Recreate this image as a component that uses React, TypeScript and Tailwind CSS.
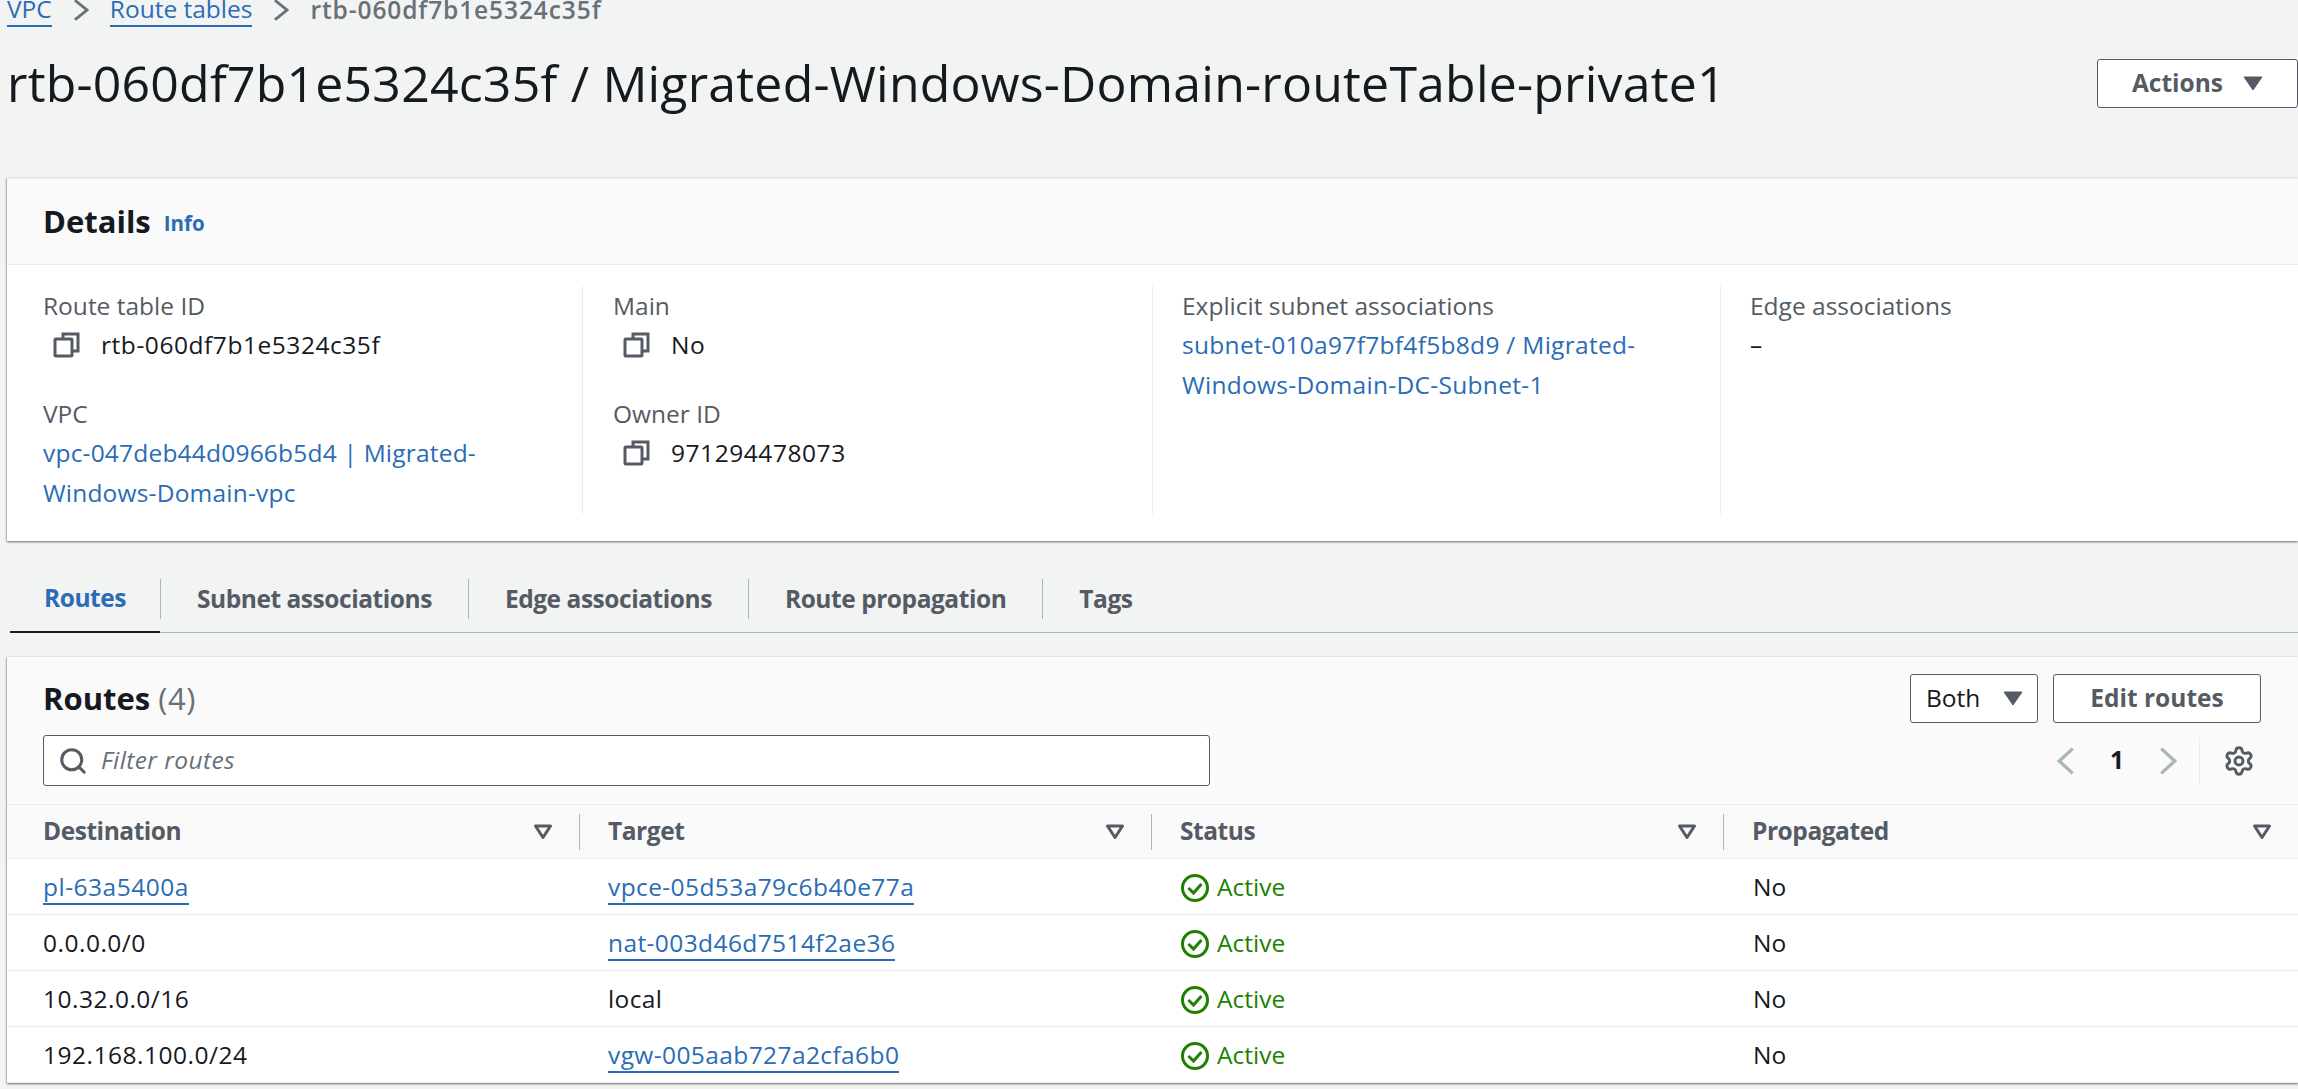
import { Search, Settings } from "lucide-react";

const linkCls = "text-[#2a6cb5]";

function Caret() {
  return (
    <svg width="20" height="15" viewBox="0 0 20 15" className="shrink-0">
      <path d="M1 1h18L10 14z" fill="#545b64" stroke="#545b64" strokeLinejoin="round" />
    </svg>
  );
}

function FilterCaret() {
  return (
    <svg width="20" height="16" viewBox="0 0 20 16" className="shrink-0">
      <path d="M2.5 2h15L10 13.5z" fill="none" stroke="#545b64" strokeWidth="3" strokeLinejoin="round" />
    </svg>
  );
}

function Chevron({ dir, color, w, h }: { dir: "left" | "right"; color: string; w: number; h: number }) {
  return (
    <svg width={w} height={h} viewBox="0 0 16 26" preserveAspectRatio="none" className="shrink-0" fill="none" stroke={color} strokeWidth="3">
      <path d={dir === "right" ? "M2 1.5L14 13 2 24.5" : "M14 1.5L2 13l12 11.5"} />
    </svg>
  );
}

function CopyIcon() {
  return (
    <svg width="27" height="26" viewBox="0 0 27 26" className="shrink-0" fill="none" stroke="#545b64" strokeWidth="3">
      <path d="M10 6V2h15v17h-6" />
      <rect x="2" y="7" width="17" height="17" rx="1" />
    </svg>
  );
}

function ActiveIcon() {
  return (
    <svg width="30" height="30" viewBox="0 0 30 30" className="shrink-0" fill="none" stroke="#1d8102" strokeWidth="3">
      <circle cx="15" cy="15" r="12.5" />
      <path d="M8.5 15l5 5 8-9" />
    </svg>
  );
}

function Field({ label, children }: { label: string; children: React.ReactNode }) {
  return (
    <div className="mb-[29px]">
      <div className="leading-[40px] text-[#545b64]">{label}</div>
      <div className="mt-[-1px]">{children}</div>
    </div>
  );
}

function CopyValue({ value }: { value: string }) {
  return (
    <div className="flex items-center gap-[21px] pl-[10px] leading-[40px] text-[#16191f]">
      <CopyIcon />
      <span className="tracking-[0.55px]">{value}</span>
    </div>
  );
}

const routes = [
  { dest: "pl-63a5400a", destLink: true, target: "vpce-05d53a79c6b40e77a", targetLink: true },
  { dest: "0.0.0.0/0", destLink: false, target: "nat-003d46d7514f2ae36", targetLink: true },
  { dest: "10.32.0.0/16", destLink: false, target: "local", targetLink: false },
  { dest: "192.168.100.0/24", destLink: false, target: "vgw-005aab727a2cfa6b0", targetLink: true },
];

const tabs = ["Subnet associations", "Edge associations", "Route propagation", "Tags"];

export default function App() {
  return (
    <div className="h-[1089px] overflow-hidden bg-[#f2f3f3] text-[24.5px] text-[#16191f] [font-family:'Open_Sans',sans-serif]">
      {/* breadcrumb sits partly above the fold */}
      <div className="mt-[-10px] flex h-[40px] items-center pl-[7px]">
        <span className={`${linkCls} border-b-2 border-[#2a6cb5] leading-[32px]`}>VPC</span>
        <span className="mx-[21px]">
          <Chevron dir="right" color="#687078" w={16} h={22} />
        </span>
        <span className={`${linkCls} border-b-2 border-[#2a6cb5] leading-[32px]`}>Route tables</span>
        <span className="mx-[21px]">
          <Chevron dir="right" color="#687078" w={16} h={22} />
        </span>
        <span className="font-semibold tracking-[0.9px] text-[#687078]">rtb-060df7b1e5324c35f</span>
      </div>

      <div className="flex items-center justify-between pl-[7px] pt-[24px]">
        <h1 className="text-[50px] leading-[58px] font-normal tracking-[0.2px]">
          rtb-060df7b1e5324c35f / Migrated-Windows-Domain-routeTable-private1
        </h1>
        <button className="flex h-[49px] w-[201px] items-center justify-center gap-[20px] rounded-[3px] border-[1.5px] border-[#545b64] bg-white font-bold text-[#545b64]">
          Actions
          <Caret />
        </button>
      </div>

      <section className="mt-[66px] ml-[7px] h-[363px] border-t border-[#eaeded] bg-white shadow-[0_1px_2px_#687078,-1px_0_1px_#d5dbdb]">
        <div className="flex h-[86px] items-center gap-[13px] border-b border-[#eaeded] bg-[#fafafa] pl-[36px]">
          <h2 className="text-[31px] font-bold">Details</h2>
          <span className={`${linkCls} pt-[4px] text-[20.5px] font-bold`}>Info</span>
        </div>
        <div className="grid grid-cols-[576px_570px_568px_1fr] pt-[21px]">
          <div className="h-[228px] border-r border-[#eaeded] pl-[36px]">
            <Field label="Route table ID">
              <CopyValue value="rtb-060df7b1e5324c35f" />
            </Field>
            <Field label="VPC">
              <div className={`${linkCls} w-[480px] leading-[40px] tracking-[0.2px]`}>vpc-047deb44d0966b5d4 | Migrated-Windows-Domain-vpc</div>
            </Field>
          </div>
          <div className="h-[228px] border-r border-[#eaeded] pl-[30px]">
            <Field label="Main">
              <CopyValue value="No" />
            </Field>
            <Field label="Owner ID">
              <CopyValue value="971294478073" />
            </Field>
          </div>
          <div className="h-[228px] border-r border-[#eaeded] pl-[29px]">
            <Field label="Explicit subnet associations">
              <div className={`${linkCls} w-[490px] leading-[40px] tracking-[0.3px]`}>subnet-010a97f7bf4f5b8d9 / Migrated-Windows-Domain-DC-Subnet-1</div>
            </Field>
          </div>
          <div className="pl-[29px]">
            <Field label="Edge associations">
              <div className="leading-[40px]">–</div>
            </Field>
          </div>
        </div>
      </section>

      <div className="mt-[29px] ml-[10px] flex h-[63px] items-stretch border-b border-[#aab7b8] font-bold tracking-[-0.45px] text-[#545b64]">
        <div className="mb-[-1px] flex w-[150px] items-center border-b-2 border-[#16191f] pb-[4px] pl-[34px] text-[#2a6cb5]">Routes</div>
        {tabs.map((tab) => (
          <div key={tab} className="flex items-center pb-[4px]">
            <span className="h-[40px] border-l border-[#aab7b8]" />
            <span className="px-[36px]">{tab}</span>
          </div>
        ))}
      </div>

      <section className="mt-[24px] ml-[7px] h-[426px] bg-white shadow-[0_1px_2px_#687078,-1px_0_1px_#d5dbdb]">
        <div className="h-[147px] bg-[#fafafa] px-[36px] pt-[17px]">
          <div className="flex items-center justify-between">
            <h2 className="text-[31px] font-bold">
              Routes <span className="font-normal tracking-[0.5px] text-[#687078]">(4)</span>
            </h2>
            <div className="flex items-center gap-[15px] pr-[1px]">
              <button className="flex h-[49px] w-[128px] items-center justify-between rounded-[3px] border border-[#545b64] bg-white pr-[14px] pl-[15px]">
                Both
                <Caret />
              </button>
              <button className="h-[49px] w-[208px] rounded-[3px] border border-[#545b64] bg-white font-bold text-[#545b64]">Edit routes</button>
            </div>
          </div>
          <div className="mt-[12px] flex items-center justify-between">
            <div className="flex h-[51px] w-[1167px] items-center gap-[13px] rounded-[3px] border border-[#545b64] bg-white pl-[14px]">
              <Search size={30} strokeWidth={2.4} className="text-[#545b64]" />
              <span className="tracking-[0.4px] text-[#687078] italic">Filter routes</span>
            </div>
            <div className="flex h-[50px] items-center pr-[7px]">
              <Chevron dir="left" color="#aab7b8" w={18} h={28} />
              <span className="mx-[35px] font-bold">1</span>
              <Chevron dir="right" color="#aab7b8" w={18} h={28} />
              <span className="ml-[22px] h-[48px] border-l border-[#eaeded]" />
              <Settings size={32} strokeWidth={2.2} className="ml-[23px] text-[#545b64]" />
            </div>
          </div>
        </div>
        <div className="grid h-[55px] grid-cols-[573px_572px_572px_1fr] items-center border-y border-[#eaeded] bg-[#fafafa] font-bold tracking-[-0.45px] text-[#545b64]">
          {["Destination", "Target", "Status", "Propagated"].map((col, i) => (
            <div key={col} className={`flex h-[36px] items-center justify-between pr-[26px] ${i === 0 ? "pl-[36px]" : "pl-[28px]"} ${i < 3 ? "border-r border-[#aab7b8]" : ""}`}>
              {col}
              <FilterCaret />
            </div>
          ))}
        </div>
        {routes.map((r) => (
          <div key={r.dest} className="grid h-[56px] grid-cols-[573px_572px_572px_1fr] items-center border-b border-[#eaeded] pt-[2px] text-[#16191f]">
            <div className="pl-[36px] tracking-[0.5px]">
              <span className={r.destLink ? `${linkCls} border-b-2 border-[#2a6cb5]` : ""}>{r.dest}</span>
            </div>
            <div className="pl-[28px] tracking-[0.4px]">
              <span className={r.targetLink ? `${linkCls} border-b-2 border-[#2a6cb5]` : ""}>{r.target}</span>
            </div>
            <div className="flex items-center gap-[7px] pl-[28px] text-[#1d8102]">
              <ActiveIcon />
              Active
            </div>
            <div className="pl-[29px]">No</div>
          </div>
        ))}
      </section>
    </div>
  );
}
